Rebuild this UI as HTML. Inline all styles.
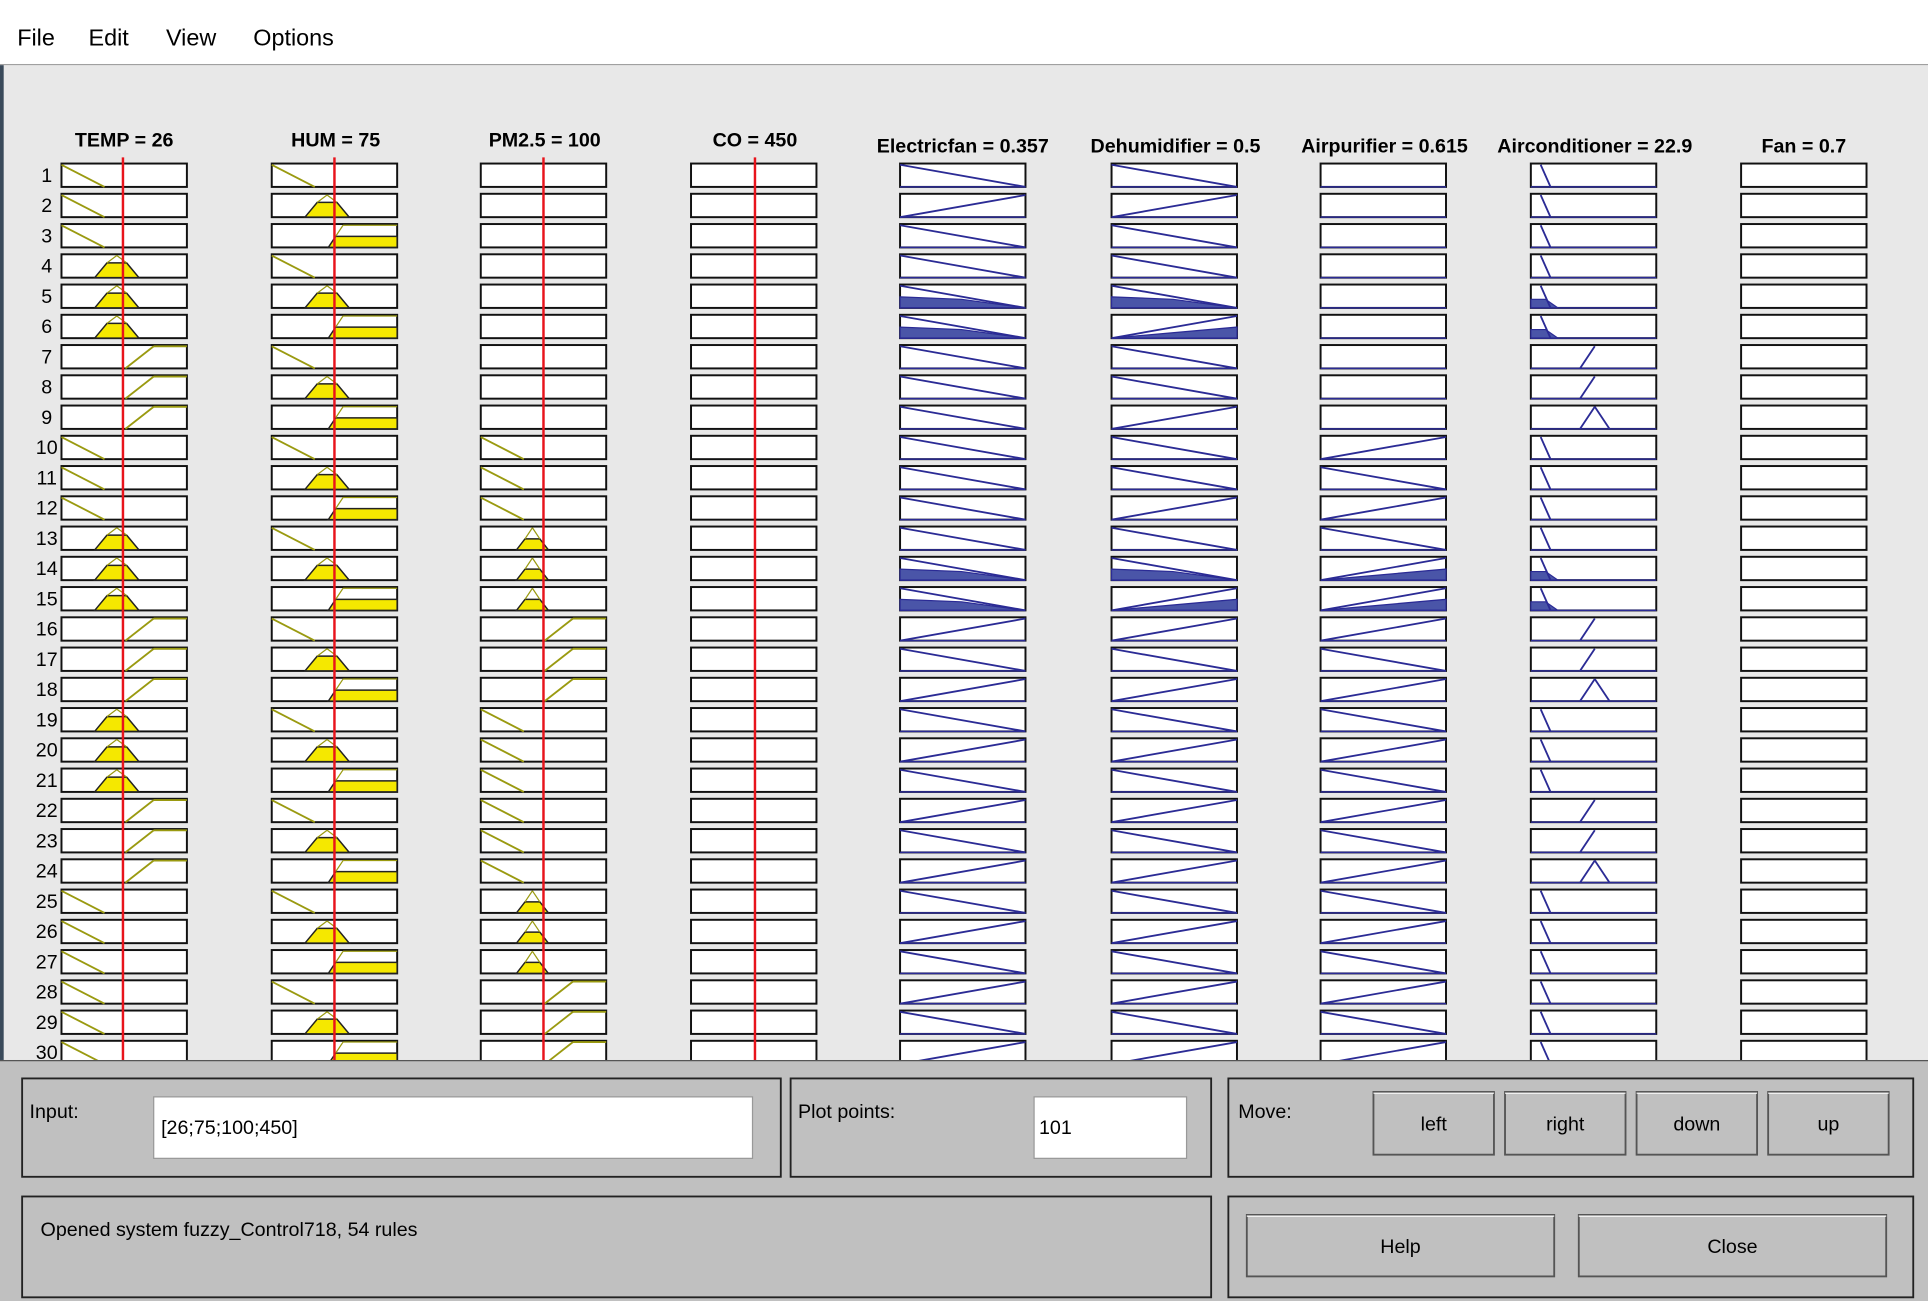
<!DOCTYPE html>
<html><head><meta charset="utf-8"><style>
html,body{margin:0;padding:0;background:#e8e8e8;overflow:hidden}
svg{display:block}
text{font-family:"Liberation Sans",sans-serif}
</style></head><body>
<svg id="s" width="1928" height="1301" viewBox="0 0 1568 1058" preserveAspectRatio="none" xmlns="http://www.w3.org/2000/svg">
<rect x="0" y="0" width="1568" height="1058" fill="#e8e8e8"/>
<rect x="0" y="0" width="1568" height="52" fill="#fff"/>
<line x1="0" y1="52.5" x2="1568" y2="52.5" stroke="#a0a0a0"/>
<rect x="0" y="53" width="3" height="810" fill="#3a4a5a"/>
<text x="14" y="37" font-size="19">File</text>
<text x="72" y="37" font-size="19">Edit</text>
<text x="135" y="37" font-size="19">View</text>
<text x="206" y="37" font-size="19">Options</text>
<g font-weight="bold" font-size="16" text-anchor="middle">
<text x="101" y="119">TEMP = 26</text>
<text x="273" y="119">HUM = 75</text>
<text x="443" y="119">PM2.5 = 100</text>
<text x="614" y="119">CO = 450</text>
<text x="783" y="124">Electricfan = 0.357</text>
<text x="956" y="124">Dehumidifier = 0.5</text>
<text x="1126" y="124">Airpurifier = 0.615</text>
<text x="1297" y="124">Airconditioner = 22.9</text>
<text x="1467" y="124">Fan = 0.7</text>
</g>
<g id="g"></g>
<rect x="0" y="862" width="1568" height="196" fill="#c0c0c0"/>
<line x1="0" y1="862.5" x2="1568" y2="862.5" stroke="#555"/>
<g fill="none" stroke="#222" stroke-width="1.5">
<rect x="18" y="877" width="617" height="80"/>
<rect x="643" y="877" width="342" height="80"/>
<rect x="999" y="877" width="557" height="80"/>
<rect x="18" y="973" width="967" height="82"/>
<rect x="999" y="973" width="557" height="82"/>
</g>
<rect x="125" y="892" width="487" height="50" fill="#fff" stroke="#999"/>
<rect x="841" y="892" width="124" height="50" fill="#fff" stroke="#999"/>
<g font-size="16">
<text x="24" y="909">Input:</text>
<text x="131" y="922">[26;75;100;450]</text>
<text x="649" y="909">Plot points:</text>
<text x="845" y="922">101</text>
<text x="1007" y="909">Move:</text>
<text x="33" y="1005">Opened system fuzzy_Control718, 54 rules</text>
</g>
<g id="b" font-size="16" text-anchor="middle"></g>
</svg>
<script>
var g=document.getElementById('g'),h='';
var cols=[50,221,391,562,732,904,1074,1245,1416];
var W=102,H=19;
function L(a,b,c,d,col,sw){return '<line x1="'+a+'" y1="'+b+'" x2="'+c+'" y2="'+d+'" stroke="'+col+'" stroke-width="'+(sw||1.5)+'"/>';}
var OL='#9a9a10',NV='#2b2b95';
function inMF(t,x,y){
 if(t=='L')return L(x,y+1,x+35,y+H,OL);
 if(t=='M')return '<polygon points="'+(x+27)+','+(y+H)+' '+(x+37)+','+(y+7)+' '+(x+53)+','+(y+7)+' '+(x+63)+','+(y+H)+'" fill="#f5e800" stroke="#222" stroke-width="1.2"/>'+L(x+37,y+7,x+45,y+1,OL,1)+L(x+45,y+1,x+53,y+7,OL,1);
 if(t=='H')return L(x+52,y+H,x+75,y+1,OL)+L(x+75,y+1,x+W,y+1,OL);
 if(t=='HF')return '<polygon points="'+(x+46)+','+(y+H)+' '+(x+52)+','+(y+10)+' '+(x+W)+','+(y+10)+' '+(x+W)+','+(y+H)+'" fill="#f5e800" stroke="#222" stroke-width="1.2"/>'+L(x+52,y+10,x+58,y+1,OL,1)+L(x+58,y+1,x+W,y+1,OL,1);
 if(t=='MS')return '<polygon points="'+(x+29)+','+(y+H)+' '+(x+36)+','+(y+10)+' '+(x+48)+','+(y+10)+' '+(x+55)+','+(y+H)+'" fill="#f5e800" stroke="#222" stroke-width="1.2"/>'+L(x+36,y+10,x+42,y+1,OL,1)+L(x+42,y+1,x+48,y+10,OL,1);
 return '';
}
function outMF(t,x,y){
 if(t=='D')return L(x,y+1,x+W,y+H,NV);
 if(t=='A')return L(x,y+H,x+W,y+1,NV);
 if(t=='DF')return '<polygon points="'+x+','+(y+10)+' '+(x+50)+','+(y+12)+' '+(x+W)+','+(y+H)+' '+x+','+(y+H)+'" fill="#4a55a8" stroke="'+NV+'"/>'+L(x,y+1,x+W,y+H,NV);
 if(t=='AF')return '<polygon points="'+x+','+(y+H)+' '+(x+W)+','+(y+10)+' '+(x+W)+','+(y+H)+'" fill="#4a55a8" stroke="'+NV+'"/>'+L(x,y+H,x+W,y+1,NV);
 if(t=='AC')return L(x+8,y+1,x+16,y+H,NV);
 if(t=='ACF')return '<polygon points="'+x+','+(y+12)+' '+(x+12)+','+(y+12)+' '+(x+22)+','+(y+H)+' '+x+','+(y+H)+'" fill="#4a55a8" stroke="'+NV+'"/>'+L(x+8,y+1,x+16,y+H,NV);
 if(t=='ACP')return L(x+40,y+H,x+52,y+1,NV);
 if(t=='ACT')return L(x+40,y+H,x+52,y+1,NV)+L(x+52,y+1,x+64,y+H,NV);
 return '';
}
for(var r=1;r<=30;r++){
 var y=133+(r-1)*24.6;
 h+='<text x="38" y="'+(y+15)+'" font-size="16" text-anchor="middle">'+r+'</text>';
 var tb=Math.floor((r-1)/3);
 var temp=['L','M','H','L','M','H','M','H','L','L'][tb];
 var hum=['L','M','HF'][(r-1)%3];
 var pm=['','','','L','MS','H','L','L','MS','H'][tb];
 var i=(r-1)%3;
 var ef=(r%2)?'D':'A',dh=(r%2)?'D':'A';
 if(tb>=1&&tb<=3){ef=['D','D','D'][i];dh=['D','D','A'][i];}
 var ap=tb<3?'':((r%2)?'D':'A');
 var ac=(tb==2||tb==5||tb==7)?(i==2?'ACT':'ACP'):'AC';
 if(r==5||r==14){ef='DF';dh='DF';if(r==14)ap='AF';ac='ACF';}
 if(r==6||r==15){ef='DF';dh='AF';if(r==15)ap='AF';ac='ACF';}
 var types=[temp,hum,pm,''];
 for(var c=0;c<9;c++){
  var x=cols[c];
  h+='<rect x="'+x+'" y="'+y+'" width="'+W+'" height="'+H+'" fill="#fff" stroke="#111" stroke-width="1.6"/>';
  if(c<4)h+=inMF(types[c],x,y);
  else if(c==4)h+=outMF(ef,x,y);
  else if(c==5)h+=outMF(dh,x,y);
  else if(c==6)h+=outMF(ap,x,y);
  else if(c==7)h+=outMF(ac,x,y);
  if(c>=4&&c<=7){h+=L(x,y+H,x+W,y+H,NV,1.2);}
 }
}
[100,272,442,614].forEach(function(x){h+=L(x,128,x,862,'#e8141c',2);});
g.innerHTML=h;
var b='',btn=[[1117,888,98,51,'left'],[1224,888,98,51,'right'],[1331,888,98,51,'down'],[1438,888,98,51,'up'],[1014,988,250,50,'Help'],[1284,988,250,50,'Close']];
btn.forEach(function(q){
 b+='<rect x="'+q[0]+'" y="'+q[1]+'" width="'+q[2]+'" height="'+q[3]+'" fill="#c0c0c0" stroke="#555" stroke-width="1.5"/>';
 b+='<line x1="'+q[0]+'" y1="'+(q[1]+1)+'" x2="'+(q[0]+q[2])+'" y2="'+(q[1]+1)+'" stroke="#fff"/>';
 b+='<text x="'+(q[0]+q[2]/2)+'" y="'+(q[1]+q[3]/2+6)+'">'+q[4]+'</text>';
});
document.getElementById('b').innerHTML=b;
</script>
</body></html>
